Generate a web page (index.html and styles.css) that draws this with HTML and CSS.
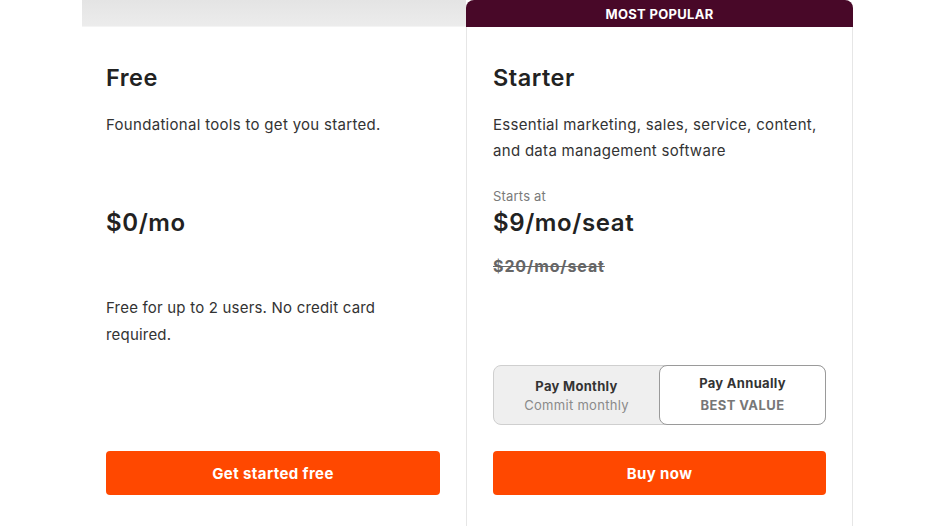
FILE: index.html
```html
<!DOCTYPE html>
<html lang="en">
<head>
<meta charset="utf-8">
<title>Pricing</title>
<link rel="stylesheet" href="styles.css">
</head>
<body>
<div class="plans">
  <section class="plan plan--free">
    <div class="plan-top plan-top--plain"></div>
    <div class="plan-body">
      <h2 class="plan-name">Free</h2>
      <p class="plan-desc">Foundational tools to get you started.</p>
      <div class="price-block">
        <div class="price price--solo">$0/mo</div>
        <p class="plan-note">Free for up to 2 users. No credit card required.</p>
      </div>
      <a class="cta" href="#">Get started free</a>
    </div>
  </section>
  <section class="plan plan--starter">
    <div class="plan-top plan-top--popular">MOST POPULAR</div>
    <div class="plan-body">
      <h2 class="plan-name">Starter</h2>
      <p class="plan-desc">Essential marketing, sales, service, content, and data management software</p>
      <div class="price-block">
        <div class="starts-at">Starts at</div>
        <div class="price">$9/mo/seat</div>
        <div class="old-price">$20/mo/seat</div>
      </div>
      <div class="billing">
        <button class="billing-opt">
          <span class="billing-title">Pay Monthly</span>
          <span class="billing-sub">Commit monthly</span>
        </button>
        <button class="billing-opt billing-opt--active">
          <span class="billing-title">Pay Annually</span>
          <span class="billing-sub billing-sub--strong">BEST VALUE</span>
        </button>
      </div>
      <a class="cta" href="#">Buy now</a>
    </div>
  </section>
</div>
</body>
</html>
```

FILE: styles.css
```css
* { box-sizing: border-box; }

html, body {
  margin: 0;
  padding: 0;
  background: #ffffff;
}

body {
  font-family: Inter, "Noto Sans", "Liberation Sans", sans-serif;
  color: #2b2b2b;
  overflow: hidden;
}

.plans {
  display: flex;
  padding-left: 82px;
  height: 526px;
}

.plan {
  display: flex;
  flex-direction: column;
  height: 526px;
}

.plan--free { width: 384px; }
.plan--starter { width: 387px; }

.plan-top {
  height: 27px;
  flex: none;
}

.plan-top--plain {
  background: linear-gradient(#e4e4e4, #ececec);
  border-bottom: 1px solid #f4f4f4;
}

.plan-top--popular {
  background: #480828;
  color: #ffffff;
  border-radius: 8px 8px 0 0;
  font-size: 13px;
  font-weight: 700;
  letter-spacing: 0.3px;
  display: flex;
  align-items: center;
  justify-content: center;
}

.plan-body {
  flex: 1;
  display: flex;
  flex-direction: column;
  padding: 37px 26px 31px 24px;
}

.plan--starter .plan-body {
  border-left: 1px solid #e6e6e6;
  border-right: 1px solid #e6e6e6;
  padding-left: 26px;
}

.plan-name {
  margin: 0;
  font-size: 23.5px;
  line-height: 28px;
  font-weight: 600;
  letter-spacing: 0.5px;
  color: #222;
}

.plan-desc {
  margin: 20px 0 0;
  font-size: 15px;
  line-height: 26px;
  letter-spacing: 0.3px;
  min-height: 52px;
  color: #333;
}

.price-block {
  margin-top: 23px;
}

.starts-at {
  font-size: 13px;
  line-height: 18px;
  letter-spacing: 0.2px;
  color: #7a7a7a;
  margin-bottom: 3px;
}

.price {
  font-size: 24px;
  line-height: 30px;
  font-weight: 600;
  letter-spacing: 0.6px;
  color: #222;
}

.price--solo {
  margin-top: 21px;
}

.old-price {
  margin-top: 17px;
  font-size: 16px;
  line-height: 22px;
  font-weight: 700;
  letter-spacing: 0.9px;
  color: #666;
  text-decoration: line-through;
}

.plan-note {
  margin: 56px 0 0;
  font-size: 15px;
  line-height: 27px;
  letter-spacing: 0.2px;
  color: #333;
  max-width: 300px;
}

.billing {
  margin-top: 88px;
  display: flex;
  height: 60px;
  border: 1px solid #cfcfcf;
  border-radius: 8px;
  background: #efefef;
}

.billing-opt {
  flex: 1;
  display: flex;
  flex-direction: column;
  align-items: center;
  justify-content: center;
  border: 0;
  background: transparent;
  font-family: inherit;
  padding: 0;
  gap: 1px;
}

.billing-opt--active {
  background: #ffffff;
  border: 1px solid #9a9a9a;
  border-radius: 8px;
  margin: -1px -1px -1px 0;
  gap: 4px;
  padding-bottom: 2px;
}

.billing-title {
  font-size: 13px;
  line-height: 18px;
  font-weight: 700;
  letter-spacing: 0.3px;
  color: #333;
}

.billing-sub {
  font-size: 13px;
  line-height: 18px;
  letter-spacing: 0.3px;
  color: #8a8a8a;
}

.billing-sub--strong {
  font-weight: 700;
  color: #777;
  letter-spacing: 0.4px;
}

.cta {
  margin-top: auto;
  height: 44px;
  display: flex;
  align-items: center;
  justify-content: center;
  background: #ff4800;
  color: #ffffff;
  border-radius: 4px;
  font-size: 15px;
  font-weight: 700;
  letter-spacing: 0.4px;
  text-decoration: none;
}
```
